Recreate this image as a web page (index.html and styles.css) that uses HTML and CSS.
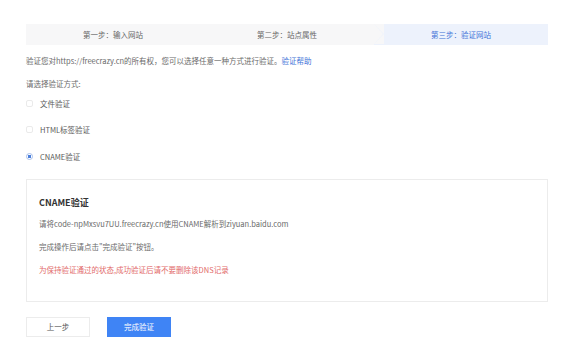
FILE: index.html
```html
<!DOCTYPE html>
<html lang="zh-CN">
<head>
  <meta charset="UTF-8" />
  <title>验证网站</title>
  <link rel="stylesheet" href="styles.css">
</head>
<body>
  <main class="verify-page">
    <div class="steps">
      <div class="step">第一步：输入网站</div>
      <div class="step">第二步：站点属性</div>
      <div class="step active">第三步：验证网站</div>
    </div>

    <p class="desc">验证您对https://freecrazy.cn的所有权，您可以选择任意一种方式进行验证。<a href="#" class="help-link">验证帮助</a></p>
    <p class="desc pick">请选择验证方式:</p>

    <ul class="methods">
      <li class="method"><span class="radio"></span>文件验证</li>
      <li class="method"><span class="radio"></span>HTML标签验证</li>
      <li class="method"><span class="radio checked"></span>CNAME验证</li>
    </ul>

    <div class="card">
      <h3 class="card-title">CNAME验证</h3>
      <p class="card-line">请将code-npMxsvu7UU.freecrazy.cn使用CNAME解析到ziyuan.baidu.com</p>
      <p class="card-line">完成操作后请点击"完成验证"按钮。</p>
      <p class="card-line warn">为保持验证通过的状态,成功验证后请不要删除该DNS记录</p>
    </div>

    <div class="actions">
      <button class="btn">上一步</button>
      <button class="btn primary">完成验证</button>
    </div>
  </main>
</body>
</html>
```

FILE: styles.css
```css
* { margin: 0; padding: 0; box-sizing: border-box; }

body {
  font-family: "Noto Sans CJK SC", "Liberation Sans", sans-serif;
  background: #ffffff;
  color: #666;
  font-size: 7.5px;
}

.verify-page {
  width: 522px;
  margin: 24px 0 0 26px;
  display: flex;
  flex-direction: column;
}

.steps {
  display: flex;
  height: 21px;
  background: #f7f7f8;
}

.step {
  flex: 1;
  display: flex;
  align-items: center;
  justify-content: center;
  color: #666;
  position: relative;
}

.step.active {
  background: #edf2fc;
  color: #3f73d8;
}

/* chevron between step 2 and step 3 */
.step.active::before {
  content: "";
  position: absolute;
  left: 0;
  top: 0;
  border-top: 10.5px solid #f7f7f8;
  border-bottom: 10.5px solid #f7f7f8;
  border-left: 10px solid transparent;
}

.step.active::after {
  content: "";
  position: absolute;
  left: 0;
  top: 0;
  border-top: 10.5px solid transparent;
  border-bottom: 10.5px solid transparent;
  border-left: 9px solid #f7f7f8;
}

.desc {
  line-height: 12px;
  margin-top: 10px;
  color: #6a6a6a;
}

.desc.pick { margin-top: 11px; }

.help-link {
  color: #3f73d8;
  text-decoration: none;
}

.methods {
  list-style: none;
}

.method {
  display: flex;
  align-items: center;
  height: 26.5px;
  color: #5a5a5a;
}

.radio {
  width: 7px;
  height: 7px;
  border: 1px solid #eaeaea;
  border-radius: 2px;
  margin-right: 7px;
}

.radio.checked {
  border-radius: 50%;
  border-color: #a9c0ea;
  background: radial-gradient(circle, #4a7fdc 0 1.6px, #ffffff 2px);
}

.card {
  margin-top: 9px;
  height: 123px;
  border: 1px solid #ececec;
  padding: 16px 12px 0;
}

.card-title {
  font-size: 9px;
  font-weight: bold;
  color: #333;
  line-height: 14px;
  margin-bottom: 8px;
}

.card-line {
  line-height: 12px;
  margin-bottom: 11px;
  color: #6a6a6a;
}

.card-line.warn { color: #e26a6a; }

.actions {
  display: flex;
  gap: 17px;
  margin-top: 15px;
}

.btn {
  width: 64px;
  height: 20px;
  border: 1px solid #ececec;
  background: #ffffff;
  color: #555;
  font-family: inherit;
  font-size: 7.5px;
  cursor: pointer;
}

.btn.primary {
  background: #3f84f5;
  border-color: #3f84f5;
  color: #ffffff;
}
```
